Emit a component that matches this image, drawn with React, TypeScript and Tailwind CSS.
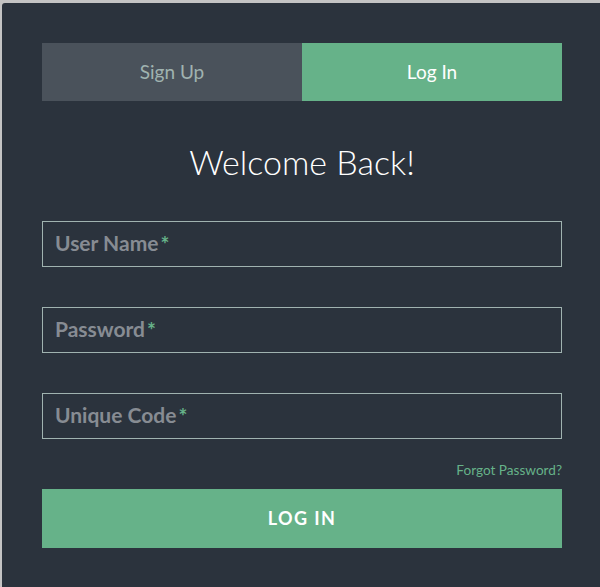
const field =
  "flex h-[46px] items-center border border-[#a0b3b0] px-3 pb-[3px] text-[21px] font-bold text-[#878c93]";

export default function App() {
  return (
    <div className="min-h-[587px] overflow-hidden bg-[#c4c4c4] pl-[2px] pt-[3px] font-['Lato','Noto_Sans',sans-serif]">
      <div className="min-h-[584px] w-[600px] rounded-tl-[3px] bg-[#2b333d] px-10 pt-10">
        <div className="flex h-[58px]">
          <div className="flex flex-1 items-center justify-center bg-[#4a525b] text-[19px] text-[#a0b3b0]">
            Sign Up
          </div>
          <div className="flex flex-1 items-center justify-center bg-[#66b289] text-[19px] text-white">
            Log In
          </div>
        </div>

        <h1 className="mt-[39px] mb-[37px] text-center text-[34px] font-light leading-[44px] text-white">
          Welcome Back!
        </h1>

        <div className="flex flex-col gap-10">
          <Field label="User Name" />
          <Field label="Password" />
          <Field label="Unique Code" />
        </div>

        <p className="mt-[22px] text-right text-[13.6px] leading-[18px] text-[#66b289]">
          Forgot Password?
        </p>

        <button
          type="button"
          className="mt-[10px] flex h-[59px] w-full items-center justify-center bg-[#66b289] text-[18px] font-bold tracking-[0.08em] text-white"
        >
          LOG IN
        </button>
      </div>
    </div>
  );
}

function Field({ label }: { label: string }) {
  return (
    <div className={field}>
      {label}
      <span className="ml-[2px] self-start pt-[6px] text-[21px] text-[#66b289]">*</span>
    </div>
  );
}
